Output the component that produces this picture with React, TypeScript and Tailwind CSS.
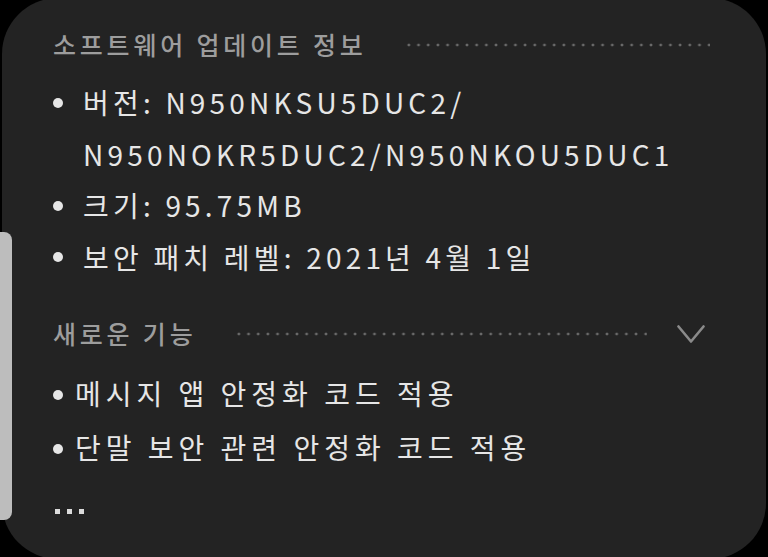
const font = { fontFamily: '"Noto Sans CJK KR", "Noto Sans", sans-serif' };

function Dots({ className = '' }: { className?: string }) {
  return (
    <div
      className={`h-[4px] flex-1 bg-[radial-gradient(circle,#6a6a6a_1.2px,transparent_1.7px)] bg-[length:9.7px_4px] bg-repeat-x ${className}`}
    />
  );
}

function Bullet({ className = 'mr-[20px]' }: { className?: string }) {
  return <span className={`h-[10px] w-[10px] shrink-0 rounded-full bg-[#e6e6e6] ${className}`} />;
}

export default function App() {
  return (
    <div className="h-[557px] w-[768px] overflow-hidden bg-black" style={font}>
      <div className="relative mx-[2px] -mt-[2px] h-[561px] rounded-[56px] bg-[#232323] pl-[51px] pr-[56px] pt-[30px] text-[#e6e6e6]">
        {/* scrollbar */}
        <div className="absolute -left-[2px] top-[234px] h-[288px] w-[12px] rounded-r-[8px] bg-[#bdbdbd]" />

        <div className="flex h-[34px] items-center">
          <h2 className="text-[25px] font-medium tracking-[3.8px] text-[#9d9d9d]">소프트웨어 업데이트 정보</h2>
          <Dots className="ml-[37px]" />
        </div>

        <ul className="mt-[15px] text-[28px] leading-[51.5px] tracking-[4.2px]">
          <li className="flex">
            <span className="flex h-[51.5px] items-center">
              <Bullet />
            </span>
            <span>
              버전: N950NKSU5DUC2/
              <br />
              N950NOKR5DUC2/N950NKOU5DUC1
            </span>
          </li>
          <li className="flex items-center">
            <Bullet />
            <span>크기: 95.75MB</span>
          </li>
          <li className="flex items-center">
            <Bullet />
            <span>보안 패치 레벨: 2021년 4월 1일</span>
          </li>
        </ul>

        <div className="mt-[34px] flex h-[34px] items-center">
          <h2 className="text-[25px] font-medium tracking-[3.8px] text-[#9d9d9d]">새로운 기능</h2>
          <Dots className="ml-[38px]" />
          <svg width="28" height="19" viewBox="0 0 28 19" className="ml-[30px] mr-[5px]">
            <polyline points="1.5,1.5 14,16.5 26.5,1.5" fill="none" stroke="#8a8a8a" strokeWidth="2.6" strokeLinecap="round" strokeLinejoin="round" />
          </svg>
        </div>

        <ul className="mt-[15px] text-[28px] leading-[54px] tracking-[5px]">
          <li className="flex items-center">
            <Bullet className="mr-[12px] mt-[3px] h-[9px] w-[9px]" />
            <span>메시지 앱 안정화 코드 적용</span>
          </li>
          <li className="flex items-center">
            <Bullet className="mr-[12px] mt-[3px] h-[9px] w-[9px]" />
            <span>단말 보안 관련 안정화 코드 적용</span>
          </li>
        </ul>

        <div className="mt-[35px] flex gap-[7px] pl-[2px]">
          <span className="h-[5px] w-[5px] bg-[#dcdcdc]" />
          <span className="h-[5px] w-[5px] bg-[#dcdcdc]" />
          <span className="h-[5px] w-[5px] bg-[#dcdcdc]" />
        </div>
      </div>
    </div>
  );
}
